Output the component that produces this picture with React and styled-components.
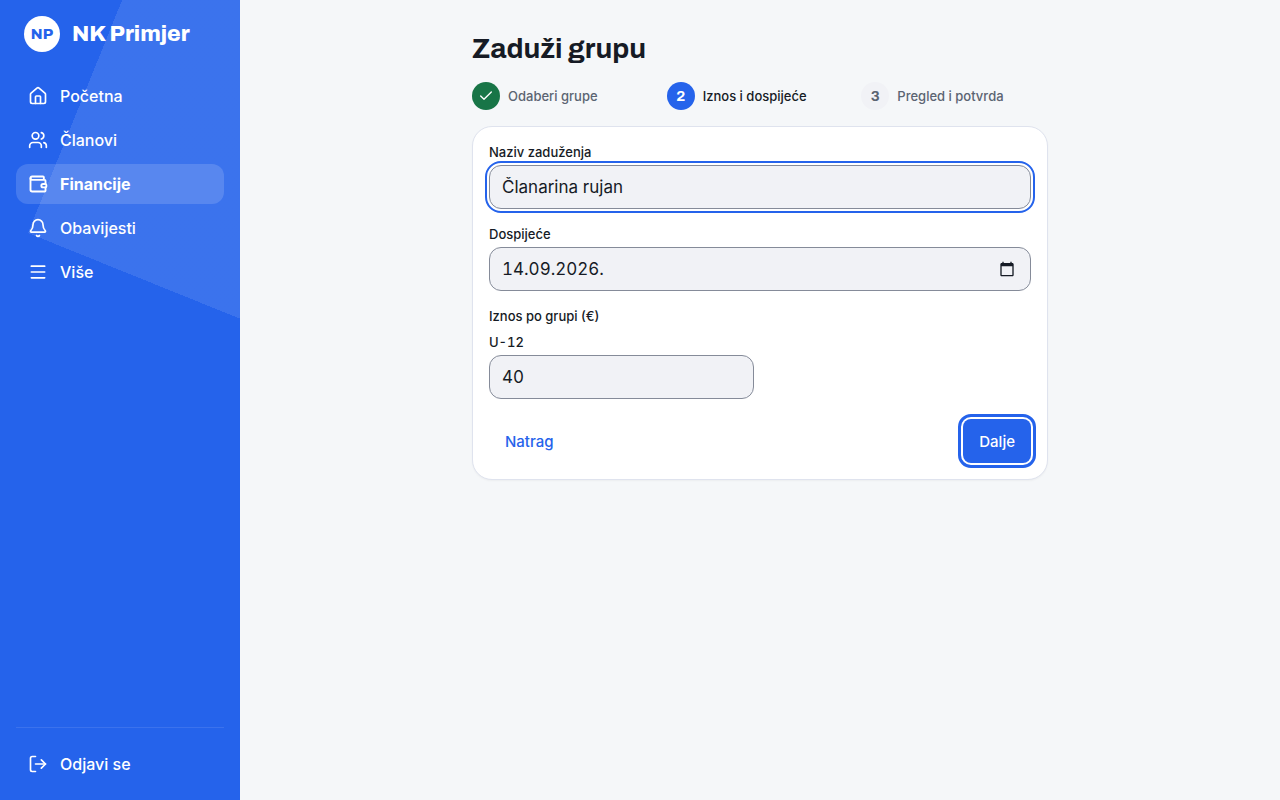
import React, { useState } from "react";
import styled, { createGlobalStyle } from "styled-components";
import { House, Users, Wallet, Bell, Menu, LogOut, Check } from "lucide-react";

const GlobalStyle = createGlobalStyle`
    * {
        box-sizing: border-box;
    }
    body {
        margin: 0;
        background: #f5f7f9;
        color: #161b25;
        font-family: "Inter", "Liberation Sans", sans-serif;
        font-size: 16px;
    }
    button,
    input {
        font: inherit;
        color: inherit;
    }
`;

const headingFont = `"Archivo", "Liberation Sans", sans-serif`;

const Layout = styled.div`
    display: flex;
    min-height: 100vh;
`;

const Sidebar = styled.aside`
    display: flex;
    flex-direction: column;
    flex: 0 0 240px;
    padding: 16px;
    color: #fff;
    background: conic-gradient(
            from 22deg at 28px 233px,
            rgba(255, 255, 255, 0.1) 90deg,
            transparent 90deg
        )
        #2563eb;
`;

const Brand = styled.div`
    display: flex;
    align-items: center;
    gap: 12px;
    padding: 0 8px;
    margin-bottom: 24px;
`;

const BrandBadge = styled.span`
    display: grid;
    place-items: center;
    width: 36px;
    height: 36px;
    border-radius: 50%;
    background: #fff;
    color: #2563eb;
    font-family: ${headingFont};
    font-size: 15px;
    font-weight: 800;
`;

const BrandName = styled.span`
    font-family: ${headingFont};
    font-size: 22px;
    font-weight: 800;
    line-height: 32px;
`;

const Nav = styled.nav`
    display: flex;
    flex-direction: column;
    gap: 4px;
`;

const NavLink = styled.a`
    display: flex;
    align-items: center;
    gap: 12px;
    height: 40px;
    padding: 0 12px;
    border-radius: 12px;
    color: #fff;
    font-weight: ${(props) => (props.$active ? 700 : 500)};
    text-decoration: none;
    background: ${(props) =>
        props.$active ? "rgba(255, 255, 255, 0.15)" : "transparent"};
`;

const SidebarFooter = styled.div`
    margin-top: auto;
    padding-top: 16px;
    border-top: 1px solid rgba(255, 255, 255, 0.1);
`;

const LogoutButton = styled.button`
    display: flex;
    align-items: center;
    gap: 12px;
    width: 100%;
    height: 40px;
    padding: 0 12px;
    border: 0;
    background: none;
    font-weight: 500;
`;

const Main = styled.main`
    flex: 1;
    padding: 32px;
`;

const Content = styled.div`
    display: flex;
    flex-direction: column;
    gap: 16px;
    max-width: 576px;
    margin: 0 auto;
`;

const Title = styled.h1`
    margin: 0;
    font-family: ${headingFont};
    font-size: 28px;
    font-weight: 700;
    line-height: 34px;
`;

const Steps = styled.ol`
    display: grid;
    grid-template-columns: repeat(3, 1fr);
    gap: 8px;
    margin: 0;
    padding: 0;
    list-style: none;
`;

const Step = styled.li`
    display: flex;
    align-items: center;
    gap: 8px;
    font-size: 13px;
    font-weight: 500;
    color: ${(props) => (props.$state === "current" ? "#161b25" : "#5b6472")};
`;

const stepColors = {
    done: "#187547",
    current: "#2563eb",
    next: "#f1f2f6",
};

const StepDot = styled.span`
    display: grid;
    place-items: center;
    width: 28px;
    height: 28px;
    border-radius: 50%;
    font-family: ${headingFont};
    font-size: 15px;
    font-weight: 700;
    background: ${(props) => stepColors[props.$state]};
    color: ${(props) => (props.$state === "next" ? "#5b6472" : "#fff")};
`;

const Card = styled.form`
    display: flex;
    flex-direction: column;
    gap: 16px;
    padding: 16px;
    border: 1px solid #dfe3ee;
    border-radius: 20px;
    background: #fff;
    box-shadow: 0 1px 2px rgba(22, 27, 37, 0.04);
`;

const Field = styled.div`
    display: flex;
    flex-direction: column;
    gap: 4px;
`;

const Label = styled.label`
    font-size: 13px;
    font-weight: 500;
    line-height: 18px;
    font-variant-numeric: tabular-nums;
`;

const InputBox = styled.div`
    display: flex;
    align-items: center;
    height: 44px;
    padding: 0 12px;
    border: 1px solid #858b99;
    border-radius: 12px;
    background: #f1f2f6;
    outline: ${(props) => (props.$focused ? "2px solid #2563eb" : "none")};
    outline-offset: 2px;
`;

const Input = styled.input`
    flex: 1;
    min-width: 0;
    padding: 0;
    border: 0;
    outline: 0;
    background: none;
    font-size: 17px;
    font-variant-numeric: ${(props) =>
        props.$numeric ? "tabular-nums" : "normal"};
`;

const PickerButton = styled.button`
    display: grid;
    place-items: center;
    width: 22px;
    height: 24px;
    padding: 0;
    border: 0;
    background: none;
`;

const Group = styled.fieldset`
    min-width: 0;
    margin: 0;
    padding: 0;
    border: 0;
`;

const Legend = styled.legend`
    padding: 0;
    margin-bottom: 8px;
    font-size: 13px;
    font-weight: 500;
    line-height: 18px;
`;

const AmountGrid = styled.div`
    display: grid;
    grid-template-columns: repeat(2, minmax(0, 1fr));
    gap: 12px;
`;

const Actions = styled.div`
    display: flex;
    justify-content: space-between;
    padding-top: 4px;
`;

const Button = styled.button`
    height: 44px;
    padding: 0 16px;
    border: 0;
    border-radius: 8px;
    font-size: 15px;
    font-weight: 500;
    color: ${(props) => (props.$primary ? "#fff" : "#2563eb")};
    background: ${(props) => (props.$primary ? "#2563eb" : "transparent")};
    outline: ${(props) => (props.$primary ? "3px solid #2563eb" : "none")};
    outline-offset: 2px;
`;

const CalendarIcon = () => (
    <svg width="16" height="16" viewBox="0 0 24 24" fill="#161b25" aria-hidden="true">
        <path d="M20 3h-1V1h-2v2H7V1H5v2H4c-1.100 0-2 .9-2 2v16c0 1.100.9 2 2 2h16c1.100 0 2-.9 2-2V5c0-1.100-.9-2-2-2zm0 18H4V8h16v13z" />
    </svg>
);

const links = [
    { label: "Početna", icon: House },
    { label: "Članovi", icon: Users },
    { label: "Financije", icon: Wallet, active: true },
    { label: "Obavijesti", icon: Bell },
    { label: "Više", icon: Menu },
];

const steps = [
    { label: "Odaberi grupe", state: "done" },
    { label: "Iznos i dospijeće", state: "current" },
    { label: "Pregled i potvrda", state: "next" },
];

const App = () => {
    const [name, setName] = useState("Članarina rujan");
    const [dueDate, setDueDate] = useState("14.09.2026.");
    const [amount, setAmount] = useState("40");

    return (
        <Layout>
            <GlobalStyle />
            <Sidebar>
                <Brand>
                    <BrandBadge>NP</BrandBadge>
                    <BrandName>NK Primjer</BrandName>
                </Brand>
                <Nav>
                    {links.map(({ label, icon: Icon, active }) => (
                        <NavLink key={label} href="#" $active={active}>
                            <Icon size={20} strokeWidth={active ? 2.25 : 2} />
                            {label}
                        </NavLink>
                    ))}
                </Nav>
                <SidebarFooter>
                    <LogoutButton type="button">
                        <LogOut size={20} />
                        Odjavi se
                    </LogoutButton>
                </SidebarFooter>
            </Sidebar>
            <Main>
                <Content>
                    <Title>Zaduži grupu</Title>
                    <Steps>
                        {steps.map(({ label, state }, index) => (
                            <Step key={label} $state={state}>
                                <StepDot $state={state}>
                                    {state === "done" ? <Check size={16} /> : index + 1}
                                </StepDot>
                                {label}
                            </Step>
                        ))}
                    </Steps>
                    <Card onSubmit={(e) => e.preventDefault()}>
                        <Field>
                            <Label htmlFor="name">Naziv zaduženja</Label>
                            <InputBox $focused>
                                <Input
                                    id="name"
                                    value={name}
                                    onChange={(e) => setName(e.target.value)}
                                />
                            </InputBox>
                        </Field>
                        <Field>
                            <Label htmlFor="due">Dospijeće</Label>
                            <InputBox>
                                <Input
                                    id="due"
                                    $numeric
                                    value={dueDate}
                                    onChange={(e) => setDueDate(e.target.value)}
                                />
                                <PickerButton type="button" aria-label="Odaberi datum">
                                    <CalendarIcon />
                                </PickerButton>
                            </InputBox>
                        </Field>
                        <Group>
                            <Legend>Iznos po grupi (€)</Legend>
                            <AmountGrid>
                                <Field>
                                    <Label htmlFor="amount">U-12</Label>
                                    <InputBox>
                                        <Input
                                            id="amount"
                                            inputMode="decimal"
                                            $numeric
                                            value={amount}
                                            onChange={(e) => setAmount(e.target.value)}
                                        />
                                    </InputBox>
                                </Field>
                            </AmountGrid>
                        </Group>
                        <Actions>
                            <Button type="button">Natrag</Button>
                            <Button type="submit" $primary>
                                Dalje
                            </Button>
                        </Actions>
                    </Card>
                </Content>
            </Main>
        </Layout>
    );
};

export default App;
